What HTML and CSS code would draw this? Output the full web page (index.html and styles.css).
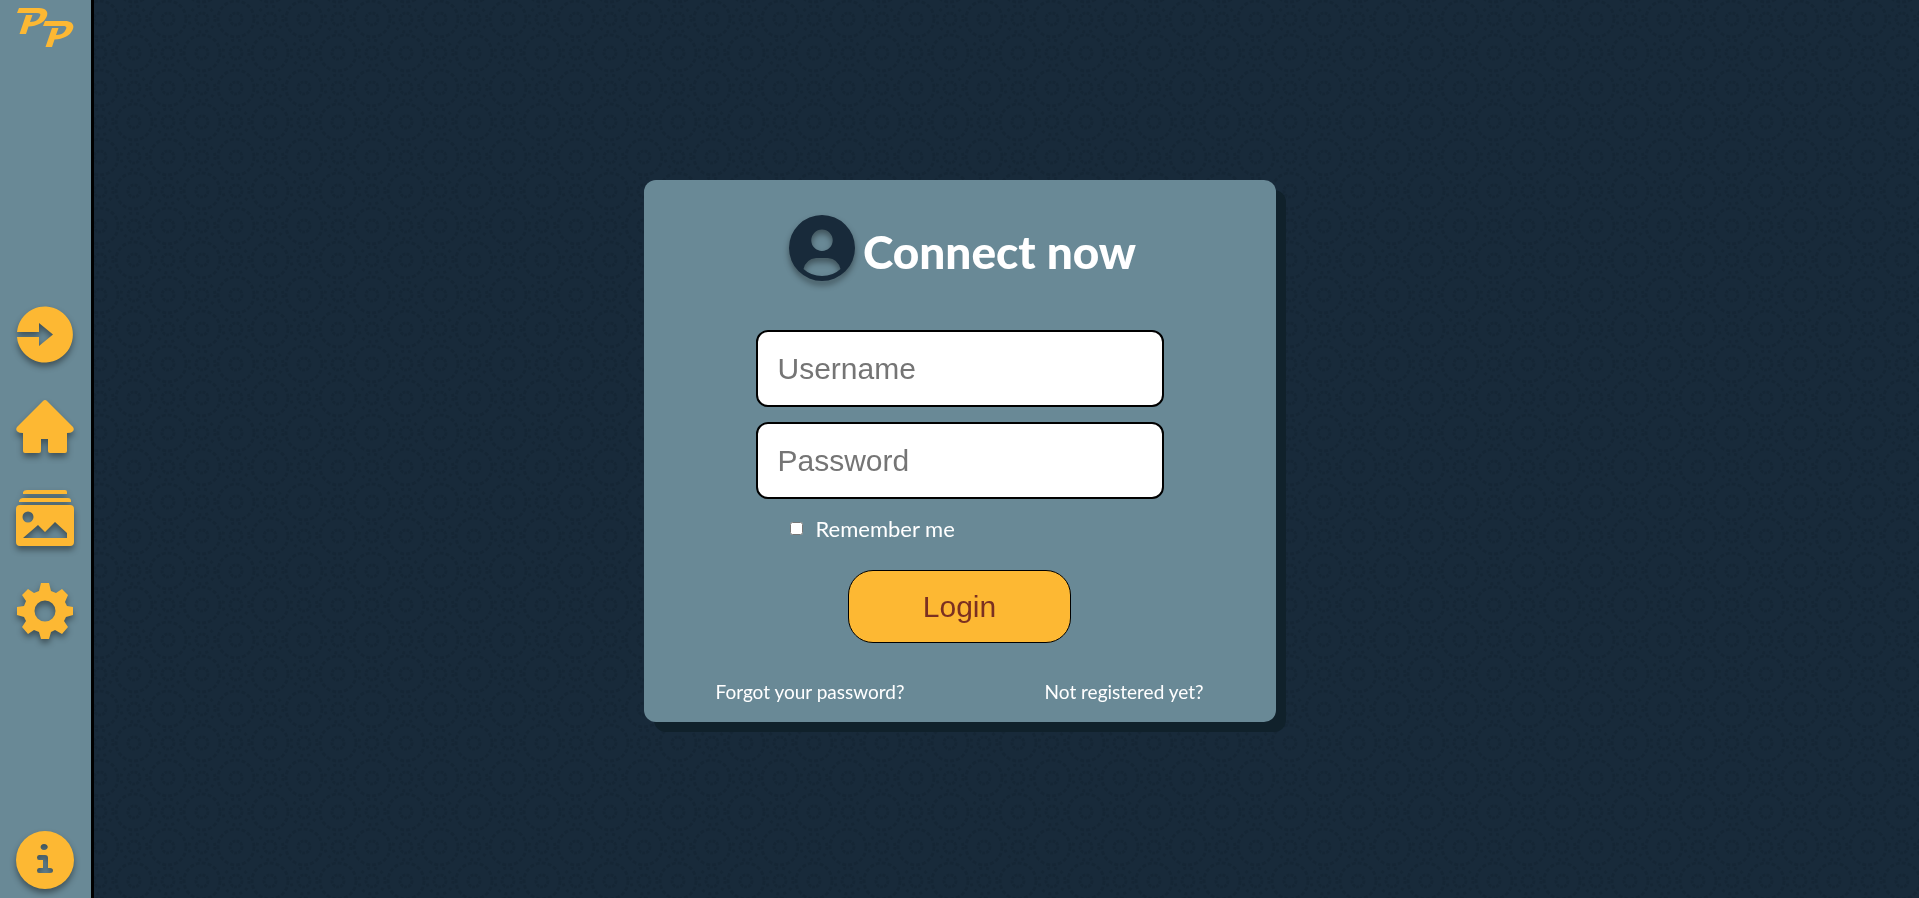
FILE: index.html
```html
<!DOCTYPE html>
<html lang="en">
<head>
<meta charset="utf-8">
<meta name="viewport" content="width=device-width, initial-scale=1">
<title>Connect now</title>
<link rel="stylesheet" href="styles.css">
</head>
<body>
<svg class="backdrop" aria-hidden="true">
  <defs>
    <pattern id="mosaic" width="68" height="69" patternUnits="userSpaceOnUse" x="134" y="19">
      <g fill="none" stroke="#152635" stroke-width="3">
        <g stroke-dasharray="4 2">
          <circle cx="34" cy="0" r="18"/>
          <circle cx="34" cy="69" r="18"/>
          <circle cx="0" cy="34" r="18"/>
          <circle cx="68" cy="34" r="18"/>
        </g>
        <g stroke-dasharray="3 1">
          <circle cx="34" cy="0" r="6"/>
          <circle cx="34" cy="69" r="6"/>
          <circle cx="0" cy="34" r="6"/>
          <circle cx="68" cy="34" r="6"/>
          <circle cx="34" cy="34" r="6"/>
          <circle cx="0" cy="0" r="6"/>
          <circle cx="68" cy="0" r="6"/>
          <circle cx="0" cy="69" r="6"/>
          <circle cx="68" cy="69" r="6"/>
        </g>
        <g stroke-dasharray="3 4">
          <circle cx="34" cy="34" r="13"/>
          <circle cx="0" cy="0" r="13"/>
          <circle cx="68" cy="0" r="13"/>
          <circle cx="0" cy="69" r="13"/>
          <circle cx="68" cy="69" r="13"/>
        </g>
      </g>
    </pattern>
  </defs>
  <rect width="100%" height="100%" fill="url(#mosaic)"/>
</svg>

<nav class="sidebar" aria-label="Main">
  <a class="brand" href="#" aria-label="Start">
    <svg viewBox="0 0 58 40" width="58" height="40" fill="#fdb833">
      <g id="swash">
        <path d="M3 0H23C30 0 33 4 30.500 9C28 15 21 18 12.500 18.500L10 26H3.500L10 7H16.500L14 14C20 14 23 11 24 8C25 6 24 5 21 5H1Z"/>
      </g>
      <use href="#swash" x="26" y="13"/>
    </svg>
  </a>
  <div class="menu">
    <a class="item" href="#" aria-label="Log in">
      <svg viewBox="0 0 58 58"><path d="M1 26H23V17L37 28.500L23 40V31H1A28 28 0 1 0 1 26Z"/></svg>
    </a>
    <a class="item" href="#" aria-label="Home">
      <svg viewBox="0 0 58 58"><path d="M27 3Q29 1 31 3L57 29Q59 32 56 34Q55 35 51 35V53Q51 55 49 55H34Q32 55 32 53V41H25V53Q25 55 23 55H9Q7 55 7 53V35Q3 35 2 34Q-1 32 1 29Z"/></svg>
    </a>
    <a class="item" href="#" aria-label="Gallery">
      <svg viewBox="0 0 58 58"><path fill-rule="evenodd" d="M11 0H49Q51 0 51 2V4H7V2Q8 0 11 0ZM7 8H52Q55 8 55 11V12H3V11Q4 8 7 8ZM4 15H54Q58 15 58 19V52Q58 56 54 56H4Q0 56 0 52V19Q0 15 4 15ZM12 21.500A5.500 5.500 0 1 0 12 32.500A5.500 5.500 0 0 0 12 21.500ZM7 48H51V43L39 32L29 42L22 35Z"/></svg>
    </a>
    <a class="item" href="#" aria-label="Settings">
      <svg viewBox="0 0 58 58"><path fill-rule="evenodd" d="M25 1H33L35 9L40 11L46 7L52 13L49 20L51 24L57 25V33L50 35L48 39L52 45L46 52L39 48L35 50L33 57H25L23 50L18 48L12 52L6 45L10 39L8 35L1 33V25L8 24L10 19L6 13L12 7L18 11L23 9ZM29 18.500A10.500 10.500 0 1 0 29 39.500A10.500 10.500 0 0 0 29 18.500Z"/></svg>
    </a>
  </div>
  <a class="item info" href="#" aria-label="Information">
    <svg viewBox="0 0 58 58"><path fill-rule="evenodd" d="M29 0A29 29 0 1 0 29 58A29 29 0 0 0 29 0ZM28 13C23.500 13 23.500 19 28 19C33 19 33 13 28 13ZM23 24H29Q32 24 32 27V37H34Q37 37 37 39.500Q37 42 34 42H23Q21 42 21 39.500Q21 37 23 37H27V29H23Q21 29 21 26.500Q21 24 23 24Z"/></svg>
  </a>
</nav>

<main class="stage">
  <form class="card">
    <h1 class="title">
      <svg class="avatar" viewBox="0 0 66 66" aria-hidden="true"><path fill-rule="evenodd" d="M33 0A33 33 0 1 0 33 66A33 33 0 0 0 33 0ZM33 14.500A10.500 10.500 0 1 0 33 36A10.500 10.500 0 0 0 33 14.500ZM27 43H39Q49 44 51.500 54Q44 61 33 61Q22 61 14.500 54Q17 44 27 43Z"/></svg>
      <span class="heading">Connect now</span>
    </h1>
    <div class="fields">
      <input class="field" type="text" placeholder="Username" aria-label="Username">
      <input class="field" type="password" placeholder="Password" aria-label="Password">
    </div>
    <label class="remember"><input class="check" type="checkbox">Remember me</label>
    <button class="login" type="submit">Login</button>
    <div class="links">
      <a href="#">Forgot your password?</a>
      <a href="#">Not registered yet?</a>
    </div>
  </form>
</main>
</body>
</html>
```
FILE: styles.css
```css
* {
  box-sizing: border-box;
}

body {
  margin: 0;
  min-height: 100vh;
  display: flex;
  background: #182a3a;
  font-family: "Gill Sans", "Gill Sans MT", Lato, sans-serif;
  color: #fff;
}

.backdrop {
  position: fixed;
  inset: 0;
  width: 100%;
  height: 100%;
  z-index: -1;
}

.sidebar {
  flex: none;
  height: 100vh;
  display: flex;
  flex-direction: column;
  align-items: center;
  justify-content: space-between;
  padding: 8px 17px 9px 16px;
  background: #698996;
  border-right: 3px solid #000;
}

.brand {
  display: block;
  height: 40px;
}

.brand svg,
.item svg {
  display: block;
}

.menu {
  display: flex;
  flex-direction: column;
  gap: 34px;
  padding-top: 66px;
}

.item svg {
  width: 58px;
  height: 58px;
  overflow: visible;
  fill: #fdb833;
  filter: drop-shadow(0 4px 3px rgba(0, 0, 0, 0.4));
}

.stage {
  flex: 1;
  display: flex;
  align-items: center;
  justify-content: center;
  padding: 4px 94px 0 0;
}

.card {
  display: flex;
  flex-direction: column;
  align-items: center;
  width: 632px;
  padding: 35px 72px 18px;
  border-radius: 12px;
  background: #698996;
  box-shadow: 10px 10px 0 #10212b;
}

.title {
  display: flex;
  align-items: flex-start;
  gap: 8px;
  margin: 0 0 45px;
  padding-left: 6px;
  font-size: 46px;
  line-height: 66px;
  font-weight: 900;
}

.heading {
  padding-top: 4px;
}

.avatar {
  width: 66px;
  height: 66px;
  fill: #182a3a;
  filter: drop-shadow(0 4px 3px rgba(0, 0, 0, 0.4));
}

.fields {
  display: flex;
  flex-direction: column;
  gap: 15px;
  width: 408px;
}

.field {
  height: 77px;
  padding: 0 20px;
  border: 2px solid #000;
  border-radius: 12px;
  background: #fff;
  font: 30px "Liberation Sans", Arial, sans-serif;
}

.field::placeholder {
  color: #757575;
}

.remember {
  display: flex;
  align-items: center;
  align-self: flex-start;
  gap: 13px;
  margin: 15px 0 27px 74px;
  font-size: 22px;
  line-height: 29px;
}

.check {
  width: 13px;
  height: 13px;
  margin: 0;
}

.login {
  width: 223px;
  height: 73px;
  border: 1px solid #000;
  border-radius: 25px;
  background: #fdb833;
  color: #7b3021;
  font: 30px "Liberation Sans", Arial, sans-serif;
}

.links {
  align-self: stretch;
  display: flex;
  justify-content: space-between;
  margin-top: 37px;
  font-size: 19px;
  line-height: 24px;
}

.links a {
  color: #fff;
  text-decoration: none;
}
```
